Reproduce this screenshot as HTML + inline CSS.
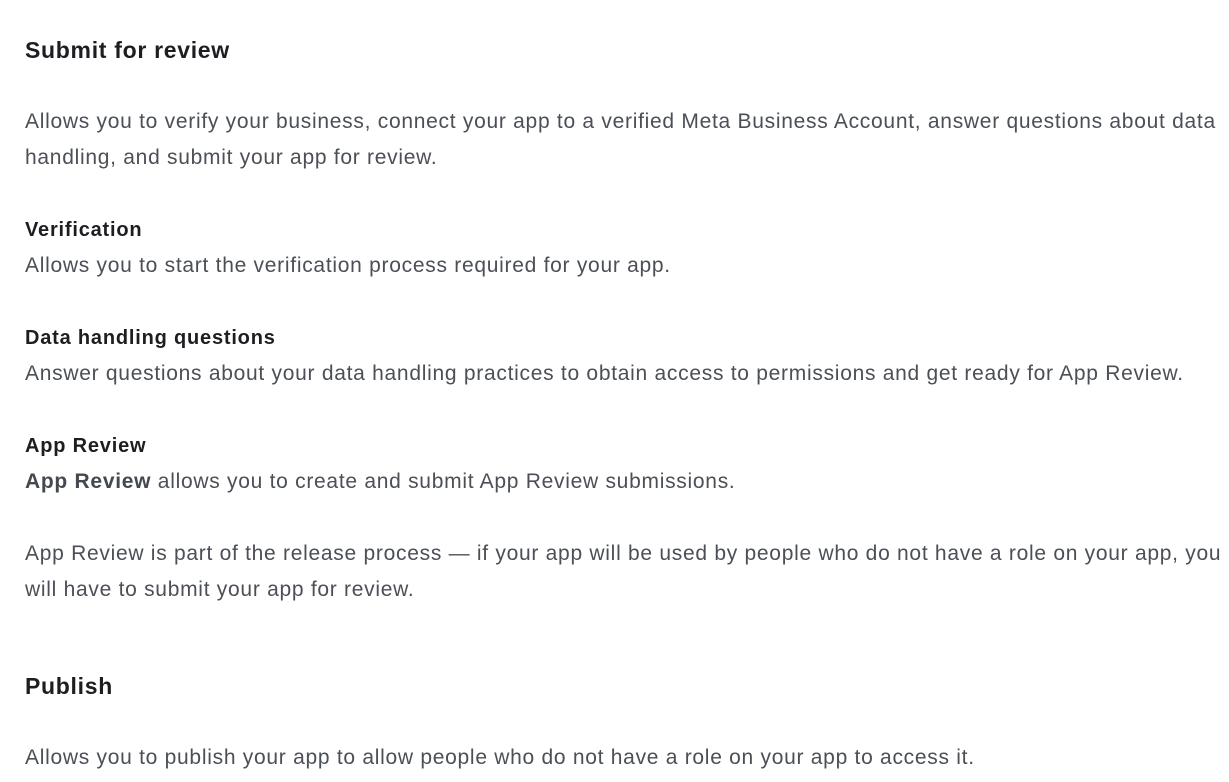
<!DOCTYPE html>
<html><head><meta charset="utf-8"><style>
html,body{margin:0;padding:0;background:#fff;width:1229px;height:782px;overflow:hidden}
body{font-family:"Liberation Sans",sans-serif;position:relative}
div{position:absolute;left:25px;white-space:nowrap;line-height:36px}
.h{font-size:23px;font-weight:bold;color:#1c1e21;letter-spacing:0.7px}
.s{font-size:20px;font-weight:bold;color:#1c1e21;letter-spacing:0.8px}
.b{font-size:21px;color:#4b4f56;letter-spacing:0.72px}
.b b{color:#444950}
</style></head><body>
<div class="h" style="top:32px">Submit for review</div>
<div class="b" style="top:104px">Allows you to verify your business, connect your app to a verified Meta Business Account, answer questions about data</div>
<div class="b" style="top:140px">handling, and submit your app for review.</div>
<div class="s" style="top:212px">Verification</div>
<div class="b" style="top:248px">Allows you to start the verification process required for your app.</div>
<div class="s" style="top:320px">Data handling questions</div>
<div class="b" style="top:356px">Answer questions about your data handling practices to obtain access to permissions and get ready for App Review.</div>
<div class="s" style="top:428px">App Review</div>
<div class="b" style="top:464px"><b>App Review</b> allows you to create and submit App Review submissions.</div>
<div class="b" style="top:536px">App Review is part of the release process — if your app will be used by people who do not have a role on your app, you</div>
<div class="b" style="top:572px">will have to submit your app for review.</div>
<div class="h" style="top:668px">Publish</div>
<div class="b" style="top:740px">Allows you to publish your app to allow people who do not have a role on your app to access it.</div>
</body></html>
